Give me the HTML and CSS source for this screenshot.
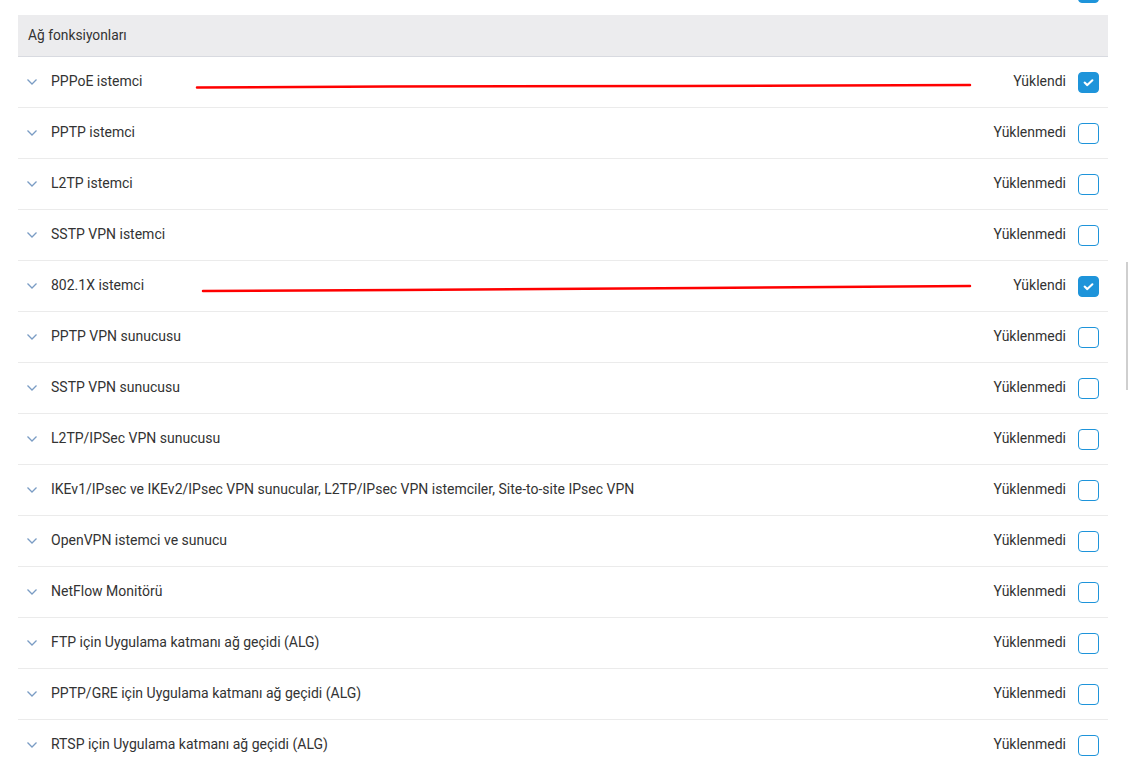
FILE: index.html
```html
<!DOCTYPE html>
<html lang="tr">
<head>
<meta charset="utf-8">
<title>Ağ fonksiyonları</title>
<link rel="stylesheet" href="styles.css">
</head>
<body>
<div class="page">
  <div class="prev-row"><span class="cb cb-on cb-cut"></span></div>
  <section class="group">
    <div class="group-head">Ağ fonksiyonları</div>
    <ul class="list">
      <li class="row"><span class="chev"><svg viewBox="0 0 10 6" width="10" height="6"><path d="M0.5 0.5 L5 5 L9.5 0.5" fill="none" stroke="#7a9cc4" stroke-width="1.3"/></svg></span><span class="name">PPPoE istemci</span><span class="state">Yüklendi</span><span class="cb cb-on"><svg viewBox="0 0 21 21" width="21" height="21"><path d="M6.2 10.6 L9.2 13.4 L14.8 8" fill="none" stroke="#fff" stroke-width="2.3" stroke-linecap="round" stroke-linejoin="round"/></svg></span></li>
      <li class="row"><span class="chev"><svg viewBox="0 0 10 6" width="10" height="6"><path d="M0.5 0.5 L5 5 L9.5 0.5" fill="none" stroke="#7a9cc4" stroke-width="1.3"/></svg></span><span class="name">PPTP istemci</span><span class="state">Yüklenmedi</span><span class="cb"></span></li>
      <li class="row"><span class="chev"><svg viewBox="0 0 10 6" width="10" height="6"><path d="M0.5 0.5 L5 5 L9.5 0.5" fill="none" stroke="#7a9cc4" stroke-width="1.3"/></svg></span><span class="name">L2TP istemci</span><span class="state">Yüklenmedi</span><span class="cb"></span></li>
      <li class="row"><span class="chev"><svg viewBox="0 0 10 6" width="10" height="6"><path d="M0.5 0.5 L5 5 L9.5 0.5" fill="none" stroke="#7a9cc4" stroke-width="1.3"/></svg></span><span class="name">SSTP VPN istemci</span><span class="state">Yüklenmedi</span><span class="cb"></span></li>
      <li class="row"><span class="chev"><svg viewBox="0 0 10 6" width="10" height="6"><path d="M0.5 0.5 L5 5 L9.5 0.5" fill="none" stroke="#7a9cc4" stroke-width="1.3"/></svg></span><span class="name">802.1X istemci</span><span class="state">Yüklendi</span><span class="cb cb-on"><svg viewBox="0 0 21 21" width="21" height="21"><path d="M6.2 10.6 L9.2 13.4 L14.8 8" fill="none" stroke="#fff" stroke-width="2.3" stroke-linecap="round" stroke-linejoin="round"/></svg></span></li>
      <li class="row"><span class="chev"><svg viewBox="0 0 10 6" width="10" height="6"><path d="M0.5 0.5 L5 5 L9.5 0.5" fill="none" stroke="#7a9cc4" stroke-width="1.3"/></svg></span><span class="name">PPTP VPN sunucusu</span><span class="state">Yüklenmedi</span><span class="cb"></span></li>
      <li class="row"><span class="chev"><svg viewBox="0 0 10 6" width="10" height="6"><path d="M0.5 0.5 L5 5 L9.5 0.5" fill="none" stroke="#7a9cc4" stroke-width="1.3"/></svg></span><span class="name">SSTP VPN sunucusu</span><span class="state">Yüklenmedi</span><span class="cb"></span></li>
      <li class="row"><span class="chev"><svg viewBox="0 0 10 6" width="10" height="6"><path d="M0.5 0.5 L5 5 L9.5 0.5" fill="none" stroke="#7a9cc4" stroke-width="1.3"/></svg></span><span class="name">L2TP/IPSec VPN sunucusu</span><span class="state">Yüklenmedi</span><span class="cb"></span></li>
      <li class="row"><span class="chev"><svg viewBox="0 0 10 6" width="10" height="6"><path d="M0.5 0.5 L5 5 L9.5 0.5" fill="none" stroke="#7a9cc4" stroke-width="1.3"/></svg></span><span class="name">IKEv1/IPsec ve IKEv2/IPsec VPN sunucular, L2TP/IPsec VPN istemciler, Site-to-site IPsec VPN</span><span class="state">Yüklenmedi</span><span class="cb"></span></li>
      <li class="row"><span class="chev"><svg viewBox="0 0 10 6" width="10" height="6"><path d="M0.5 0.5 L5 5 L9.5 0.5" fill="none" stroke="#7a9cc4" stroke-width="1.3"/></svg></span><span class="name">OpenVPN istemci ve sunucu</span><span class="state">Yüklenmedi</span><span class="cb"></span></li>
      <li class="row"><span class="chev"><svg viewBox="0 0 10 6" width="10" height="6"><path d="M0.5 0.5 L5 5 L9.5 0.5" fill="none" stroke="#7a9cc4" stroke-width="1.3"/></svg></span><span class="name">NetFlow Monitörü</span><span class="state">Yüklenmedi</span><span class="cb"></span></li>
      <li class="row"><span class="chev"><svg viewBox="0 0 10 6" width="10" height="6"><path d="M0.5 0.5 L5 5 L9.5 0.5" fill="none" stroke="#7a9cc4" stroke-width="1.3"/></svg></span><span class="name">FTP için Uygulama katmanı ağ geçidi (ALG)</span><span class="state">Yüklenmedi</span><span class="cb"></span></li>
      <li class="row"><span class="chev"><svg viewBox="0 0 10 6" width="10" height="6"><path d="M0.5 0.5 L5 5 L9.5 0.5" fill="none" stroke="#7a9cc4" stroke-width="1.3"/></svg></span><span class="name">PPTP/GRE için Uygulama katmanı ağ geçidi (ALG)</span><span class="state">Yüklenmedi</span><span class="cb"></span></li>
      <li class="row"><span class="chev"><svg viewBox="0 0 10 6" width="10" height="6"><path d="M0.5 0.5 L5 5 L9.5 0.5" fill="none" stroke="#7a9cc4" stroke-width="1.3"/></svg></span><span class="name">RTSP için Uygulama katmanı ağ geçidi (ALG)</span><span class="state">Yüklenmedi</span><span class="cb"></span></li>
    </ul>
  </section>
  <svg class="marks" width="1128" height="769" viewBox="0 0 1128 769">
    <path d="M197 87.5 L390 86.5 L680 86 L970 85" fill="none" stroke="#ff0000" stroke-width="2.5" stroke-linecap="round"/>
    <path d="M203 291 L400 290 L700 288 L970 286" fill="none" stroke="#ff0000" stroke-width="2.5" stroke-linecap="round"/>
  </svg>
  <div class="scroll-thumb"></div>
</div>
</body>
</html>
```

FILE: styles.css
```css
* { box-sizing: border-box; }
html, body { margin: 0; padding: 0; background: #fff; }
body {
  font-family: Roboto, "Liberation Sans", Arial, sans-serif;
  font-size: 14px;
  color: #333;
  overflow: hidden;
}
.page {
  position: relative;
  width: 1128px;
  height: 769px;
  padding-left: 18px;
}
.prev-row {
  width: 1090px;
  height: 15px;
  display: flex;
  justify-content: flex-end;
  align-items: flex-start;
  padding-right: 9px;
  overflow: hidden;
}
.prev-row .cb-cut { margin-top: -18px; }
.group { width: 1090px; }
.group-head {
  height: 42px;
  background: #ececee;
  border-bottom: 1px solid #d8dae0;
  padding-left: 10px;
  padding-bottom: 2px;
  display: flex;
  align-items: center;
  font-size: 13.8px;
  color: #333;
}
.list { list-style: none; margin: 0; padding: 0; }
.row {
  height: 51px;
  border-bottom: 1px solid #ebebeb;
  display: flex;
  align-items: center;
  padding-left: 9px;
  padding-right: 9px;
}
.chev {
  width: 24px;
  display: flex;
  align-items: center;
}
.chev svg { display: block; }
.name { flex: 1; white-space: nowrap; padding-bottom: 2px; }
.state { margin-right: 12px; padding-bottom: 2px; }
.cb {
  width: 21px;
  height: 21px;
  border: 1.5px solid #1e94da;
  border-radius: 4px;
  background: #fff;
  display: flex;
  align-items: center;
  justify-content: center;
  flex: none;
}
.cb-on { background: #1e94da; }
.cb svg { display: block; }
.marks {
  position: absolute;
  left: 0;
  top: 0;
  pointer-events: none;
}
.scroll-thumb {
  position: absolute;
  left: 1126px;
  top: 262px;
  width: 2px;
  height: 128px;
  background: #cfcfcf;
}
```
